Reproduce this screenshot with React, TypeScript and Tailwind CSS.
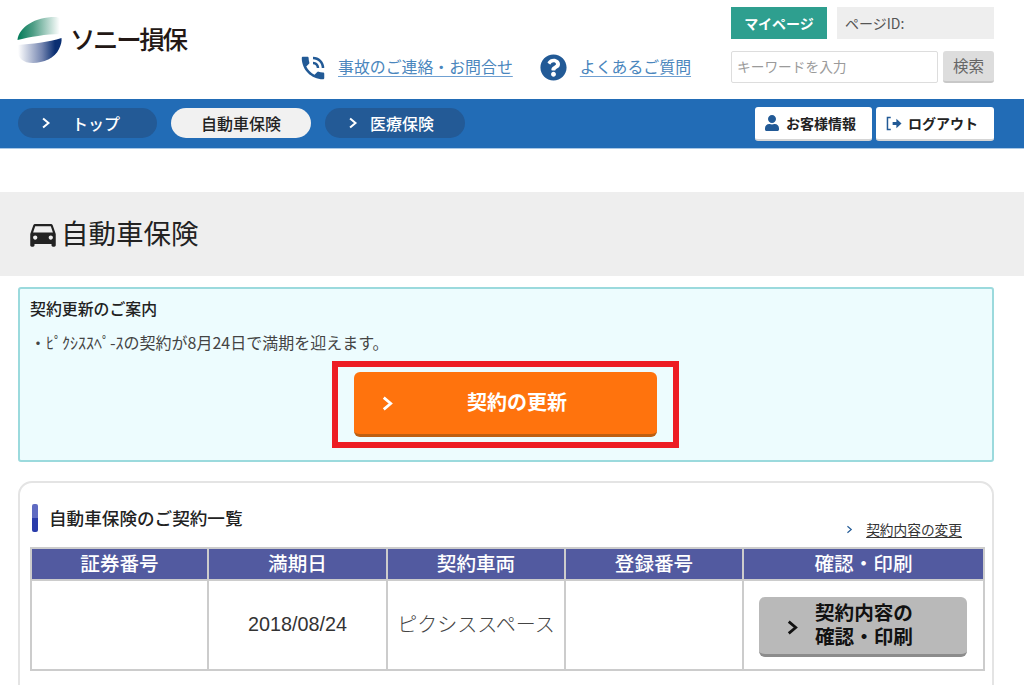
import { MdPhoneInTalk, MdDirectionsCar } from "react-icons/md";
import { FaQuestionCircle, FaUser } from "react-icons/fa";

const Chevron = ({ className, sw = 2.4 }: { className: string; sw?: number }) => (
  <svg viewBox="0 0 12 14" className={className} fill="none" stroke="currentColor" strokeWidth={sw}>
    <polyline points="2.5,1.5 9,7 2.5,12.5" />
  </svg>
);

const Logo = () => (
  <svg viewBox="0 0 46 46" className="w-[46px] h-[46px] shrink-0">
    <defs>
      <linearGradient id="lg1" x1="0" x2="1" y1="0" y2="0">
        <stop offset="0" stopColor="#007a58" />
        <stop offset="0.35" stopColor="#4f9e86" />
        <stop offset="0.95" stopColor="#ffffff" />
      </linearGradient>
      <linearGradient id="lg2" x1="0" x2="1" y1="0" y2="0">
        <stop offset="0" stopColor="#ffffff" />
        <stop offset="0.55" stopColor="#7485b0" />
        <stop offset="0.85" stopColor="#0a2f72" />
      </linearGradient>
    </defs>
    <path d="M0.5 23 C2 10 18 0 38 0 C42 0 45 2 45 6 C45 10 44 14 43 17 C30 17 12 20 0.5 23 Z" fill="url(#lg1)" />
    <path d="M1 28 C14 27 32 25 44.5 21 C45 24 44 28 42 32 C38 41 26 46 16 46 C6 46 1 41 1 35 Z" fill="url(#lg2)" />
  </svg>
);

const Pill = ({ label, active, cls }: { label: string; active?: boolean; cls: string }) => (
  <div
    className={
      "h-[30px] rounded-full flex items-center text-[16px] font-medium " +
      cls +
      (active ? " bg-[#f1f1f1] text-[#222] justify-center" : " bg-[#235a96] text-white pl-[23px]")
    }
  >
    {!active && <Chevron className="w-[10px] h-[12px] shrink-0" />}
    <span className="-mt-[1px]">{label}</span>
  </div>
);

const Th = ({ children, w }: { children: string; w: string }) => (
  <th className={"border-2 border-[#cccccc] bg-[#525aa0] text-white text-[19.6px] font-medium h-[32px] p-0 pb-[2px] leading-none text-center " + w}>
    {children}
  </th>
);

export default function App() {
  return (
    <div
      className="w-[1024px] h-[685px] overflow-hidden bg-white text-[#222]"
      style={{ fontFamily: '"Noto Sans CJK JP", "Liberation Sans", sans-serif' }}
    >
      {/* header */}
      <header className="h-[99px] flex">
        <div className="w-[300px] pl-[17px] pt-[17px] flex items-start gap-[7px]">
          <Logo />
          <span className="text-[25.5px] font-medium leading-none mt-[8px] tracking-[-2.4px] text-[#231815]">ソニー損保</span>
        </div>
        <div className="w-[431px] pt-[54px] flex items-start text-[15.9px] text-[#4a86bd]">
          <MdPhoneInTalk className="w-[30px] h-[30px] -ml-[2px] -mt-[1px] text-[#225a96]" />
          <a className="ml-[10px] mt-[1px] leading-[24px] underline underline-offset-[3px] decoration-[#6fa0d2]">事故のご連絡・お問合せ</a>
          <FaQuestionCircle className="ml-[27px] w-[27px] h-[27px] text-[#225a96]" />
          <a className="ml-[13px] mt-[1px] leading-[24px] underline underline-offset-[3px] decoration-[#6fa0d2]">よくあるご質問</a>
        </div>
        <div className="w-[263px] pt-[7px] flex flex-col gap-[12px]">
          <div className="flex gap-[10px] h-[32px]">
            <div className="w-[96px] bg-[#2e9f8f] text-white text-[14px] font-bold flex items-center justify-center">マイページ</div>
            <div className="flex-1 bg-[#eeeeee] text-[#555] text-[14px] flex items-center pl-[8px]">ページID:</div>
          </div>
          <div className="flex gap-[5px] h-[32px]">
            <div className="w-[207px] border border-[#dddddd] rounded-[2px] text-[#9a9a9a] text-[13.7px] flex items-center pl-[5px] pb-[2px]">キーワードを入力</div>
            <div className="flex-1 bg-[#dddddd] border-b-2 border-[#c8c8c8] rounded-[3px] text-[#666] text-[15.5px] flex items-center justify-center">検索</div>
          </div>
        </div>
      </header>

      {/* nav */}
      <nav className="h-[50px] bg-[#226cb6] border-b border-[#a9c8e6] flex items-start pl-[18px] pr-[30px]">
        <div className="flex gap-[14px] mt-[9px]">
          <Pill label="トップ" cls="w-[139px] gap-[21px]" />
          <Pill label="自動車保険" active cls="w-[140px]" />
          <Pill label="医療保険" cls="w-[140px] gap-[12px]" />
        </div>
        <div className="ml-auto mt-[8px] flex gap-[4px] text-[14px] font-bold">
          <div className="w-[117px] h-[34px] bg-white rounded-[3px] border-b-2 border-[#d5d5d5] flex items-center justify-center gap-[6px] pr-[7px]">
            <FaUser className="w-[16px] h-[16px] text-[#225a96]" />
            <span>お客様情報</span>
          </div>
          <div className="w-[118px] h-[34px] bg-white rounded-[3px] border-b-2 border-[#d5d5d5] flex items-center justify-center gap-[5px] pr-[6px]">
            <svg viewBox="0 0 18 16" className="w-[17px] h-[15px] text-[#225a96]" fill="none" stroke="currentColor">
              <path d="M5 1.5 H1.5 V14.5 H5" strokeWidth="1.6" />
              <path d="M7 6.3 H11 V3 L16.5 8 L11 13 V9.7 H7 Z" fill="currentColor" stroke="none" />
            </svg>
            <span>ログアウト</span>
          </div>
        </div>
      </nav>

      {/* page title */}
      <div className="mt-[43px] h-[84px] bg-[#eeeeee] flex items-center pl-[26px] gap-[1px]">
        <MdDirectionsCar className="w-[34px] h-[34px] text-[#222]" />
        <h1 className="text-[27.5px] leading-none font-normal -mt-[2px]">自動車保険</h1>
      </div>

      {/* notice */}
      <section className="mx-[18px] mt-[11px] w-[976px] h-[175px] border-2 border-[#9bdadd] rounded-[3px] bg-[#edfcfe] pl-[10px] pt-[8px]">
        <h2 className="text-[15.9px] leading-[24px] font-medium">契約更新のご案内</h2>
        <p className="mt-[9px] text-[16px] leading-[24px] text-[#444]">・ﾋﾟｸｼｽｽﾍﾟ-ｽの契約が8月24日で満期を迎えます。</p>
        <div className="ml-[302px] mt-[7px] w-[347px] h-[87px] border-[6px] border-[#ed1c24] px-[16px] pt-[5px]">
          <div className="w-[303px] h-[65px] bg-[#ff730d] border-b-[3px] border-[#bd5f11] rounded-[6px] flex items-center text-white font-bold text-[20px] pl-[27px]">
            <Chevron className="w-[13px] h-[15px] shrink-0" sw={2.6} />
            <span className="ml-[73px] -mt-[2px]">契約の更新</span>
          </div>
        </div>
      </section>

      {/* contract list */}
      <section className="mx-[18px] mt-[19px] w-[976px] h-[300px] border-2 border-[#e4e4e4] rounded-[14px] pl-[10px] pr-[11px] pt-[21px]">
        <div className="flex items-start h-[43px]">
          <div className="w-[6px] h-[28px] rounded-[2px] ml-[2px] bg-gradient-to-b from-[#5f6bc2] from-50% to-[#2a3cab] to-50%"></div>
          <h2 className="ml-[11px] text-[17.6px] leading-[28px] font-medium">自動車保険のご契約一覧</h2>
          <div className="ml-auto mr-[19px] mt-[13px] flex items-center gap-[13px] text-[13.7px] text-[#333]">
            <Chevron className="w-[7px] h-[9px] text-[#225a96]" sw={2} />
            <a className="underline underline-offset-2 leading-[24px]">契約内容の変更</a>
          </div>
        </div>
        <table className="w-[953px] border-collapse table-fixed border-2 border-[#cccccc]">
          <thead>
            <tr>
              <Th w="w-[177px]">証券番号</Th>
              <Th w="w-[179px]">満期日</Th>
              <Th w="w-[178px]">契約車両</Th>
              <Th w="w-[178px]">登録番号</Th>
              <Th w="w-[241px]">確認・印刷</Th>
            </tr>
          </thead>
          <tbody>
            <tr className="h-[90px] text-center text-[19.8px] text-[#333]">
              <td className="border-2 border-[#cccccc]"></td>
              <td className="border-2 border-[#cccccc]" style={{ fontFamily: '"Liberation Sans", sans-serif' }}>2018/08/24</td>
              <td className="border-2 border-[#cccccc] text-[#444] text-[20px] font-light pb-[3px]">ピクシススペース</td>
              <td className="border-2 border-[#cccccc]"></td>
              <td className="border-2 border-[#cccccc] p-0">
                <div className="ml-[15px] mt-[4px] w-[208px] h-[60px] bg-[#b9b9b9] border-b-[3px] border-[#8c8c8c] rounded-[6px] flex items-center pl-[27px] text-[#111] font-bold text-left">
                  <Chevron className="w-[13px] h-[15px] shrink-0 mt-[4px]" sw={2.6} />
                  <span className="ml-[16px] -mt-[4px] text-[19.6px] leading-[24px]">契約内容の<br />確認・印刷</span>
                </div>
              </td>
            </tr>
          </tbody>
        </table>
      </section>
    </div>
  );
}
